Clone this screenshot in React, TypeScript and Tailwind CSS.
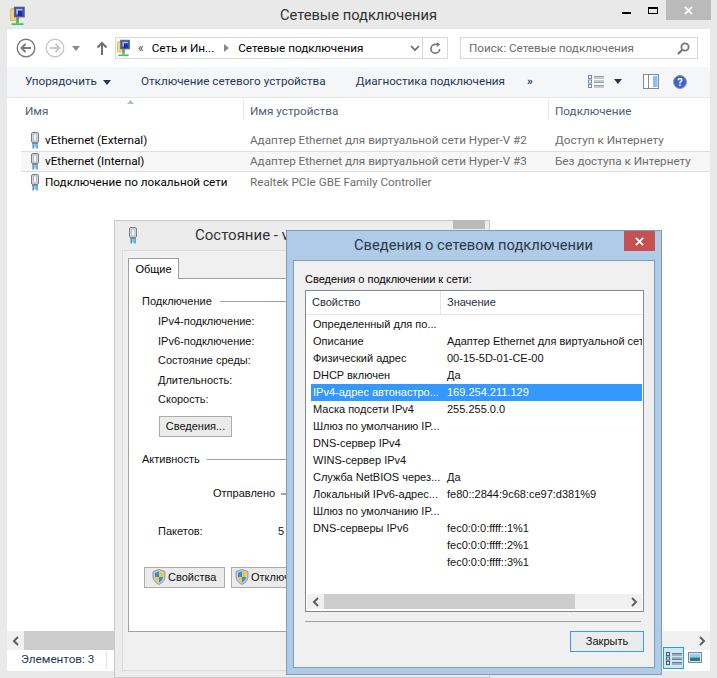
function Adapter({ className = "" }: { className?: string }) {
  return (
    <svg viewBox="0 0 12 17" className={`w-[12px] h-[17px] shrink-0 ${className}`}>
      <rect x="2.5" y="0.5" width="7" height="10" rx="1.5" fill="#d5dade" stroke="#6f7f8c" />
      <rect x="4.5" y="2" width="3" height="7" fill="#f4f6f7" stroke="#9aa6ae" strokeWidth="0.6" />
      <rect x="3" y="10.5" width="6" height="2" fill="#7f8c96" />
      <rect x="3.5" y="12.5" width="1.4" height="4" fill="#2f8fd8" />
      <rect x="5.4" y="12.5" width="1.4" height="3" fill="#66b5ea" />
      <rect x="7.3" y="12.5" width="1.4" height="4" fill="#2f8fd8" />
    </svg>
  );
}

function NetFolder({ className = "" }: { className?: string }) {
  return (
    <svg viewBox="0 0 17 23" className={`w-[17px] h-[23px] shrink-0 ${className}`}>
      <path d="M1 3h5l1 2h3v11H1z" fill="#f4d77a" stroke="#c9a63f" strokeWidth="0.8" />
      <rect x="5" y="1" width="11" height="11" fill="#3b4fb8" stroke="#5b6470" />
      <rect x="7" y="3" width="7" height="6" fill="#9db8ea" />
      <rect x="9" y="5" width="5" height="6" fill="#1d2f9c" />
      <rect x="7" y="12" width="3" height="4" fill="#7f8c96" />
      <rect x="7" y="16" width="3" height="3" fill="#3fbf6b" />
      <rect x="2" y="19" width="13" height="2" fill="#3fbf6b" />
    </svg>
  );
}

function Shield() {
  return (
    <svg viewBox="0 0 14 16" className="w-[14px] h-[16px] shrink-0">
      <path d="M7 .5 13 2.5V8c0 3.5-3 6-6 7.5C4 14 1 11.5 1 8V2.5z" fill="#c4ccd4" stroke="#7f8c96" strokeWidth="0.8" />
      <path d="M7 2.5 3 3.7V8h4z" fill="#2f8fe0" />
      <path d="M7 2.5 11 3.7V8H7z" fill="#f5c92e" />
      <path d="M3 8h4v5.4C5 12.4 3 10.5 3 8z" fill="#f5c92e" />
      <path d="M11 8H7v5.4c2-1 4-2.9 4-5.4z" fill="#2f8fe0" />
    </svg>
  );
}

function Tri({ className = "" }: { className?: string }) {
  return (
    <svg viewBox="0 0 8 5" className={`w-[8px] h-[5px] shrink-0 ${className}`}>
      <path d="M0 0h8L4 5z" fill="currentColor" />
    </svg>
  );
}

function Chevron({ left = false, className = "" }: { left?: boolean; className?: string }) {
  return (
    <svg viewBox="0 0 8 10" className={`w-[8px] h-[10px] shrink-0 ${className}`}>
      <path d={left ? "M6 1 2 5l4 4" : "M2 1l4 4-4 4"} fill="none" stroke="#5f5f5f" strokeWidth="2" />
    </svg>
  );
}

function NavCircle({ dim = false, flip = false }: { dim?: boolean; flip?: boolean }) {
  const c = dim ? "#c9c9c9" : "#7a7a7a";
  return (
    <svg viewBox="0 0 20 20" className="w-[20px] h-[20px] shrink-0">
      <circle cx="10" cy="10" r="8.8" fill="none" stroke={c} strokeWidth="1.4" />
      <path d={flip ? "M5 10h9M10.5 6l4 4-4 4" : "M15 10H6M9.5 6l-4 4 4 4"} fill="none" stroke={c} strokeWidth="2" />
    </svg>
  );
}

function DetailsIcon({ color = "#7d8a99" }: { color?: string }) {
  return (
    <svg viewBox="0 0 16 13" className="w-[16px] h-[13px] shrink-0">
      <g fill="none" stroke={color}>
        <rect x="0.5" y="0.5" width="3" height="3" />
        <rect x="0.5" y="5" width="3" height="3" />
        <rect x="0.5" y="9.5" width="3" height="3" />
        <path d="M6 1.5h10M6 3h10M6 6h10M6 7.5h10M6 10.5h10M6 12h10" strokeWidth="0.8" />
      </g>
    </svg>
  );
}

const rows = [
  { name: "vEthernet (External)", device: "Адаптер Ethernet для виртуальной сети Hyper-V #2", conn: "Доступ к Интернету" },
  { name: "vEthernet (Internal)", device: "Адаптер Ethernet для виртуальной сети Hyper-V #3", conn: "Без доступа к Интернету", sel: true },
  { name: "Подключение по локальной сети", device: "Realtek PCIe GBE Family Controller", conn: "" },
];

const props = [
  ["Определенный для по...", ""],
  ["Описание", "Адаптер Ethernet для виртуальной сети"],
  ["Физический адрес", "00-15-5D-01-CE-00"],
  ["DHCP включен", "Да"],
  ["IPv4-адрес автонастро...", "169.254.211.129"],
  ["Маска подсети IPv4", "255.255.0.0"],
  ["Шлюз по умолчанию IP...", ""],
  ["DNS-сервер IPv4", ""],
  ["WINS-сервер IPv4", ""],
  ["Служба NetBIOS через...", "Да"],
  ["Локальный IPv6-адрес...", "fe80::2844:9c68:ce97:d381%9"],
  ["Шлюз по умолчанию IP...", ""],
  ["DNS-серверы IPv6", "fec0:0:0:ffff::1%1"],
  ["", "fec0:0:0:ffff::2%1"],
  ["", "fec0:0:0:ffff::3%1"],
];

function Explorer() {
  return (
    <div className="w-[717px] h-[678px] bg-[#e9e9e9] flex flex-col">
      {/* title bar */}
      <div className="h-[29px] shrink-0 flex relative items-center justify-center">
        <NetFolder className="absolute left-[9px] top-[5px] scale-90" />
        <span className="text-[14.7px] text-[#333] mt-[1px]">Сетевые подключения</span>
        <div className="absolute left-[622px] top-[12px] w-[9px] h-[2px] bg-black" />
        <div className="absolute left-[648px] top-[7px] w-[10px] h-[7px] border border-black border-t-2" />
        <div className="absolute left-[666px] top-0 w-[45px] h-[20px] bg-[#bababa] flex items-center justify-center text-white">
          <svg viewBox="0 0 10 10" className="w-[9px] h-[9px]">
            <path d="M1 1l8 8M9 1l-8 8" stroke="#fff" strokeWidth="2" />
          </svg>
        </div>
      </div>

      <div className="mx-[7px] h-[642px] bg-white flex flex-col">
        {/* nav row */}
        <div className="h-[38px] shrink-0 flex items-center pl-[9px] pr-[12px]">
          <NavCircle />
          <div className="w-[9px]" />
          <NavCircle dim flip />
          <Tri className="ml-[7px] text-[#8a8a8a]" />
          <svg viewBox="0 0 12 14" className="w-[12px] h-[14px] ml-[16px] shrink-0">
            <path d="M6 14V2M1.5 6.5 6 2l4.5 4.5" fill="none" stroke="#6f6f6f" strokeWidth="2" />
          </svg>
          <div className="ml-[7px] w-[333px] h-[22px] border border-[#d9d9d9] flex items-center relative">
            <NetFolder className="scale-[0.8] -ml-[1px]" />
            <span className="ml-[6px] text-[12px] text-[#444] leading-none">«</span>
            <span className="ml-[8px] mt-[1px]">Сеть и Ин...</span>
            <svg viewBox="0 0 5 8" className="w-[5px] h-[8px] ml-[10px] shrink-0">
              <path d="M0 0l5 4-5 4z" fill="#8a8a8a" />
            </svg>
            <span className="ml-[9px] mt-[1px]">Сетевые подключения</span>
            <svg viewBox="0 0 10 7" className="w-[10px] h-[7px] absolute left-[294px] top-[7px]">
              <path d="M1 1l4 4 4-4" fill="none" stroke="#666" strokeWidth="1.6" />
            </svg>
            <div className="absolute left-[306px] top-0 bottom-0 border-l border-[#d9d9d9] w-[26px] flex items-center justify-center">
              <svg viewBox="0 0 14 14" className="w-[13px] h-[13px]">
                <path d="M11.5 7.5A4.7 4.7 0 1 1 7 2.6h3" fill="none" stroke="#777" strokeWidth="1.8" />
                <path d="M8.5 0v5.4L12 2.7z" fill="#777" />
              </svg>
            </div>
          </div>
          <div className="ml-[12px] w-[238px] h-[22px] border border-[#d9d9d9] flex items-center pl-[8px] pr-[7px] justify-between">
            <span className="text-[#6d6d6d] mt-[1px]">Поиск: Сетевые подключения</span>
            <svg viewBox="0 0 13 13" className="w-[13px] h-[13px]">
              <circle cx="8" cy="5" r="3.6" fill="none" stroke="#777" strokeWidth="1.8" />
              <path d="M5.3 7.7 1 12" stroke="#777" strokeWidth="2.2" />
            </svg>
          </div>
        </div>

        {/* command bar */}
        <div className="h-[31px] shrink-0 bg-[#f5f6f7] border-b border-[#e5e5e5] flex items-center text-[#1e395b] relative pl-[18px]">
          <span>Упорядочить</span>
          <Tri className="ml-[6px]" />
          <span className="ml-[30px]">Отключение сетевого устройства</span>
          <span className="ml-[30px]">Диагностика подключения</span>
          <span className="ml-[22px] font-bold leading-none">»</span>
          <div className="absolute left-[581px] top-[8px] flex items-center">
            <DetailsIcon />
            <Tri className="ml-[10px]" />
          </div>
          <svg viewBox="0 0 16 15" className="absolute left-[636px] top-[7px] w-[16px] h-[15px]">
            <rect x="0.5" y="0.5" width="15" height="14" fill="#fff" stroke="#7d8a99" />
            <rect x="10" y="2" width="4.5" height="11" fill="#8cc0ef" />
            <path d="M5.5 1v13" stroke="#7d8a99" />
          </svg>
          <div className="absolute left-[666px] top-[8px] w-[14px] h-[14px] rounded-full bg-[#3f62c4] border border-[#8d9aad] flex items-center justify-center text-white text-[11px] font-bold leading-none">
            ?
          </div>
        </div>

        {/* column headers */}
        <div className="h-[20px] mt-[1px] shrink-0 flex text-[#4c607a] relative">
          <div className="w-[237px] pl-[18px] pt-[4px] border-r border-[#e5e5e5]">Имя</div>
          <div className="w-[305px] pl-[6px] pt-[4px] border-r border-[#e5e5e5]">Имя устройства</div>
          <div className="pl-[6px] pt-[4px]">Подключение</div>
          <svg viewBox="0 0 7 4" className="absolute left-[120px] top-[1px] w-[7px] h-[4px]">
            <path d="M3.5 0 7 4H0z" fill="#a9bdd3" />
          </svg>
        </div>

        {/* items */}
        <div className="flex-1 pt-[11px] flex flex-col">
          {rows.map((r) => (
            <div
              key={r.name}
              className={`h-[21px] flex items-center border-y ml-[14px] ${r.sel ? "bg-[#f7f7f7] border-[#dedede]" : "border-transparent"}`}
            >
              <Adapter className="ml-[8px]" />
              <span className="ml-[4px] w-[205px] shrink-0 text-black whitespace-nowrap">{r.name}</span>
              <span className="w-[305px] shrink-0 text-[#6d6d6d] whitespace-nowrap">{r.device}</span>
              <span className="text-[#6d6d6d] whitespace-nowrap">{r.conn}</span>
            </div>
          ))}
        </div>

        {/* horizontal scroll */}
        <div className="h-[19px] shrink-0 flex items-stretch bg-[#f0f0f0]">
          <div className="w-[17px] flex items-center justify-center">
            <Chevron left />
          </div>
          <div className="flex-1 bg-[#cdcdcd] mr-[120px]" />
          <div className="w-[17px] ml-auto flex items-center justify-center">
            <Chevron />
          </div>
        </div>

        {/* status bar */}
        <div className="h-[21px] shrink-0 flex items-center relative pl-[14px] text-[#1e395b]">
          <span className="pr-[12px] border-r border-[#e5e5e5] -mt-[1px]">Элементов: 3</span>
          <div className="absolute left-[656px] -top-[3px] w-[21px] h-[22px] bg-[#cde8f5] border border-[#26a0da] flex items-center justify-center">
            <DetailsIcon color="#4a5a6a" />
          </div>
          <svg viewBox="0 0 14 11" className="absolute left-[681px] top-[2px] w-[14px] h-[11px]">
            <rect x="0.5" y="0.5" width="13" height="10" fill="#cfe6f3" stroke="#7d8a99" />
            <rect x="2" y="2" width="10" height="3.5" fill="#9bd0ea" />
            <rect x="2" y="5.5" width="10" height="3.5" fill="#2c7a72" />
          </svg>
        </div>
      </div>
    </div>
  );
}

function StatusWindow() {
  return (
    <div className="absolute left-[114px] top-[220px] w-[376px] h-[458px] bg-[#ececec] border border-[#c9c9c9] flex flex-col font-['Liberation_Sans',sans-serif] text-[11px]">
      <div className="h-[29px] shrink-0 flex items-center pl-[12px]">
        <Adapter />
        <span className="ml-[56px] text-[15px] text-[#333] font-[Roboto,sans-serif]">Состояние - v</span>
      </div>
      <div className="mx-[7px] flex-1 mb-[6px] bg-[#f0f0f0] border border-[#dcdcdc] pt-[7px] px-[5px] pb-[38px] flex flex-col">
        <div className="w-[51px] h-[21px] bg-white border border-b-0 border-[#a0a0a0] flex items-center justify-center relative z-10 -mb-px">Общие</div>
        <div className="flex-1 bg-white border border-[#a0a0a0] pt-[14px] pl-[13px] text-[#111]">
          <div className="flex items-center h-[16px]">
            <span>Подключение</span>
            <div className="ml-[8px] flex-1 border-t border-[#a0a0a0]" />
          </div>
          <div className="pl-[16px] mt-[4px] flex flex-col gap-[3px]">
            {["IPv4-подключение:", "IPv6-подключение:", "Состояние среды:", "Длительность:", "Скорость:"].map((t) => (
              <div key={t} className="h-[16.5px] leading-[16px]">{t}</div>
            ))}
          </div>
          <div className="ml-[17px] mt-[8px] w-[73px] h-[21px] bg-[#ebebeb] border border-[#acacac] flex items-center justify-center">Сведения...</div>
          <div className="flex items-center h-[16px] mt-[15px]">
            <span>Активность</span>
            <div className="ml-[7px] flex-1 border-t border-[#a0a0a0]" />
          </div>
          <div className="flex items-center h-[16px] mt-[18px] pl-[71px]">
            <span>Отправлено</span>
            <div className="ml-[6px] flex-1 border-t-2 border-[#a0a0a0]" />
          </div>
          <div className="flex h-[16px] mt-[21px] pl-[16px]">
            <span className="w-[120px]">Пакетов:</span>
            <span>5</span>
          </div>
          <div className="flex gap-[6px] mt-[28px] ml-[2px]">
            <div className="w-[81px] h-[21px] bg-[#ebebeb] border border-[#acacac] flex items-center pl-[7px] gap-[2px]">
              <Shield />
              <span>Свойства</span>
            </div>
            <div className="w-[90px] h-[21px] bg-[#ebebeb] border border-[#acacac] flex items-center pl-[3px] gap-[2px]">
              <Shield />
              <span>Отключить</span>
            </div>
          </div>
        </div>
      </div>
      <div className="absolute left-[338px] -top-px w-[32px] h-[9px] bg-[#bababa]" />
    </div>
  );
}

function DetailsDialog() {
  return (
    <div className="absolute left-[286px] top-[230px] w-[376px] h-[445px] bg-[#aecbe8] border border-[#7f9db9] flex flex-col font-['Liberation_Sans',sans-serif] text-[11px]">
      <div className="h-[29px] shrink-0 flex items-center justify-center relative text-[14.7px] text-[#2d3a46] font-[Roboto,sans-serif]">
        <span className="mr-[1px]">Сведения о сетевом подключении</span>
        <div className="absolute left-[337px] top-0 w-[31px] h-[20px] bg-[#c75050] flex items-center justify-center">
          <svg viewBox="0 0 10 10" className="w-[9px] h-[9px]">
            <path d="M1 1l8 8M9 1l-8 8" stroke="#fff" strokeWidth="2" />
          </svg>
        </div>
      </div>
      <div className="mx-[6px] h-[408px] bg-[#f0f0f0] border border-[#7f9db9] pl-[11px] pr-[10px] pt-[10px] flex flex-col">
        <div className="h-[16px] leading-[16px] text-black">Сведения о подключении к сети:</div>
        <div className="mt-[3px] h-[322px] bg-white border border-[#828790] flex flex-col">
          <div className="h-[24px] shrink-0 flex items-center border-b border-[#e5e5e5] text-[#1e2c3a]">
            <div className="w-[135px] h-full pl-[6px] flex items-center border-r border-[#e5e5e5]">Свойство</div>
            <div className="pl-[6px]">Значение</div>
          </div>
          <div className="flex-1 pt-[1px] pl-[5px] pr-[1px] overflow-hidden">
            {props.map(([k, v], i) => {
              const selected = i === 4;
              return (
                <div
                  key={i}
                  className={`h-[17px] flex items-center whitespace-nowrap overflow-hidden ${selected ? "bg-[#3399ff] text-white" : "text-[#111]"}`}
                >
                  <span className="w-[135px] pl-[2px] shrink-0">{k}</span>
                  <span className="pl-[1px]">{v}</span>
                </div>
              );
            })}
          </div>
          <div className="h-[15px] mb-[2px] mx-[1px] shrink-0 flex items-stretch bg-[#f0f0f0]">
            <div className="w-[17px] flex items-center justify-center">
              <Chevron left />
            </div>
            <div className="w-[251px] bg-[#cdcdcd]" />
            <div className="ml-auto w-[17px] flex items-center justify-center">
              <Chevron />
            </div>
          </div>
        </div>
        <div className="mt-[9px] mr-[3px] border-t border-[#a0a0a0]" />
        <div className="mt-[9px] self-end w-[74px] h-[21px] bg-[#ebebeb] border border-[#3399ff] flex items-center justify-center text-[#111]">
          Закрыть
        </div>
      </div>
    </div>
  );
}

export default function App() {
  return (
    <div className="relative w-[717px] h-[678px] overflow-hidden text-[11.7px] font-[Roboto,sans-serif]">
      <Explorer />
      <StatusWindow />
      <DetailsDialog />
    </div>
  );
}
